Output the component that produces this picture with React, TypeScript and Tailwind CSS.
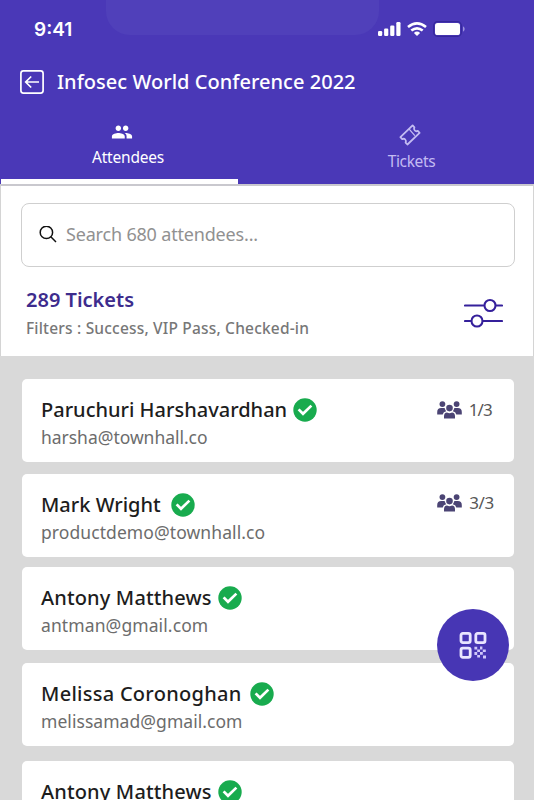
import React from "react";
import { MdPeople } from "react-icons/md";

type Attendee = {
  name: string;
  email: string;
  count?: string;
  card: string;
  row: string;
  nameStyle: string;
  emailStyle: string;
  side?: string;
};

const attendees: Attendee[] = [
  { name: "Paruchuri Harshavardhan", email: "harsha@townhall.co", count: "1/3", card: "", row: "gap-[6px]", nameStyle: "w-[246px]", emailStyle: "tracking-[-0.03px]", side: "pt-[19px] pr-[22px] gap-[7px] tracking-[-0.8px]" },
  { name: "Mark Wright", email: "productdemo@townhall.co", count: "3/3", card: "mt-[12px]", row: "gap-[10px]", nameStyle: "w-[120px]", emailStyle: "tracking-[0.08px]", side: "pt-[17px] pr-[20px] gap-[7px] tracking-[-0.3px]" },
  { name: "Antony Matthews", email: "antman@gmail.com", card: "mt-[10px]", row: "gap-[6px]", nameStyle: "w-[171px] tracking-[0.15px]", emailStyle: "tracking-[0.1px]" },
  { name: "Melissa Coronoghan", email: "melissamad@gmail.com", card: "mt-[13px]", row: "gap-[9px]", nameStyle: "w-[200px] tracking-[0.27px]", emailStyle: "tracking-[0.05px]" },
  { name: "Antony Matthews", email: "antman@gmail.com", card: "mt-[15px]", row: "gap-[6px]", nameStyle: "w-[171px] tracking-[0.15px]", emailStyle: "tracking-[0.1px]" },
];

function Signal() {
  return (
    <svg width="23" height="14" viewBox="0 0 23 14" fill="white">
      <rect x="0" y="9" width="4.2" height="5" rx="1.2" />
      <rect x="6.1" y="6.5" width="4.2" height="7.5" rx="1.2" />
      <rect x="12.2" y="3.5" width="4.2" height="10.5" rx="1.2" />
      <rect x="18.3" y="0" width="4.2" height="14" rx="1.2" />
    </svg>
  );
}

function Wifi() {
  return (
    <svg width="20" height="14" viewBox="0 0 20 14" fill="none" stroke="white" strokeWidth="2.6">
      <path d="M1 5.1Q10-2.2 19 5.1" />
      <path d="M4.3 8.6Q10 4 15.7 8.6" />
      <path d="M6.9 11Q10 8.2 13.1 11L10 14Z" fill="white" stroke="none" />
    </svg>
  );
}

function Battery() {
  return (
    <svg width="32" height="16" viewBox="0 0 32 16">
      <rect x="0.7" y="0.7" width="27.6" height="14.6" rx="3.8" fill="none" stroke="#35279b" strokeWidth="1.2" />
      <rect x="2" y="2" width="25" height="12" rx="2.6" fill="white" />
      <path d="M30 5.3Q31.7 6.3 31.7 8T30 10.7Z" fill="#9d92df" />
    </svg>
  );
}

function BackIcon() {
  return (
    <svg width="24" height="24" viewBox="0 0 24 24" fill="none" stroke="white" strokeWidth="1.7">
      <rect x="0.9" y="0.9" width="22.2" height="22.2" rx="2.5" />
      <path d="M19 12H6M11.2 6.5L5.7 12l5.5 5.5" />
    </svg>
  );
}

function TicketIcon() {
  return (
    <svg className="mr-[4px]" width="22" height="22" viewBox="0 0 22 22" fill="none" stroke="currentColor" strokeWidth="1.8" strokeLinejoin="round" strokeLinecap="round">
      <path d="M13.6 1.4L1.4 13.2L3.2 15.1Q5 14.2 6.2 15.5Q7.6 17 6.6 18.6L8.4 20.5L20.6 8.8L18.8 6.9Q17 7.8 15.8 6.5Q14.4 5 15.4 3.4Z" />
      <path d="M10.4 5.4L15.4 11.2" strokeWidth="1.3" />
    </svg>
  );
}

function CheckBadge() {
  return (
    <svg className="shrink-0" width="24" height="24" viewBox="0 0 24 24">
      <circle cx="12" cy="12" r="11.7" fill="#18ab4e" />
      <path d="M5.6 11.4L10 15.8L18.4 7.6" fill="none" stroke="white" strokeWidth="2.7" strokeLinejoin="miter" strokeLinecap="butt" />
    </svg>
  );
}

function Group() {
  return (
    <svg width="25" height="18" viewBox="0 0 25 18" fill="#4b4474">
      <circle cx="5.4" cy="3.1" r="2.9" />
      <circle cx="19.6" cy="3.1" r="2.9" />
      <path d="M0.2 13.4V11Q0.2 7 4.2 7H7.6Q8.4 9.3 9.2 10.2Q6.3 10.8 5.7 13.4Z" />
      <path d="M24.8 13.4V11Q24.8 7 20.8 7H17.4Q16.6 9.3 15.8 10.2Q18.7 10.8 19.3 13.4Z" />
      <circle cx="12.5" cy="7.1" r="3.3" />
      <path d="M7 17.6V15.3Q7 11.5 10 11.5Q12.5 13 15 11.5Q18 11.5 18 15.3V17.6Z" />
    </svg>
  );
}

function Sliders() {
  return (
    <svg width="39" height="30" viewBox="0 0 39 30" fill="none" stroke="#35209b" strokeWidth="2.1" strokeLinecap="round">
      <path d="M1 7.5H19.5M32 7.5H38M1 23H6.5M19 23H38" />
      <circle cx="26" cy="7.5" r="5.5" />
      <circle cx="13" cy="23" r="5.5" />
    </svg>
  );
}

function QrIcon() {
  return (
    <svg width="28" height="28" viewBox="0 0 28 28" fill="none" stroke="#e9e5ff" strokeWidth="2.8">
      <rect x="2" y="2.4" width="9.2" height="9.2" rx="1.8" />
      <rect x="16.8" y="2.4" width="9.2" height="9.2" rx="1.8" />
      <rect x="2" y="17.2" width="9.2" height="9.2" rx="1.8" />
      <path
        d="M15.4 15.8h2.8v2.6h-2.8zM21 15.6h2.4v2.8H21zM18.2 18.4H21V21h-2.8zM23.8 18.4h3V21h-3zM15.4 21h2.8v3h-2.8zM21 21h2.8v2.8H21zM18.2 24H21v2.6h-2.8zM24 24.4h3v3h-3z"
        fill="#d0c8fa"
        stroke="none"
      />
    </svg>
  );
}

function AttendeeCard({ a }: { a: Attendee }) {
  return (
    <article className={`flex h-[83px] shrink-0 justify-between rounded-[5px] bg-white pl-[19px] ${a.card}`}>
      <div className="flex flex-col pt-[19px]">
        <div className={`flex h-6 items-center ${a.row}`}>
          <h2 className={`text-[20px] leading-6 font-medium whitespace-nowrap text-[#1d1d1d] ${a.nameStyle}`}>{a.name}</h2>
          <CheckBadge />
        </div>
        <p className={`mt-[3px] text-[17.5px] leading-6 whitespace-nowrap text-[#6c6c6c] ${a.emailStyle}`}>{a.email}</p>
      </div>
      {a.count && (
        <div className={`flex h-fit items-center ${a.side}`}>
          <Group />
          <span className="text-[17px] leading-6 text-[#575757]">{a.count}</span>
        </div>
      )}
    </article>
  );
}

export default function App() {
  return (
    <div className="relative flex h-[800px] w-[534px] flex-col overflow-hidden bg-[#d9d9d9] font-['Noto_Sans',sans-serif]">
      <header className="relative flex h-[184px] shrink-0 flex-col bg-[#4a38b7] text-white">
        <div className="absolute top-0 left-[106px] h-[35px] w-[273px] rounded-b-[24px] bg-[#5040ba]" />
        <div className="relative flex h-[58px] items-center justify-between pr-[69px] pl-[34px]">
          <time className="pt-px font-['Inter',sans-serif] text-[19px] leading-6 font-semibold">9:41</time>
          <div className="flex items-center gap-[6px]">
            <Signal />
            <Wifi />
            <Battery />
          </div>
        </div>
        <div className="flex h-[47px] items-center gap-[11px] pl-[20px]">
          <BackIcon />
          <h1 className="pl-[2px] text-[20px] leading-6 font-medium tracking-[0.03px] whitespace-nowrap">Infosec World Conference 2022</h1>
        </div>
        <nav className="flex flex-1 pl-px">
          <button className="flex w-[237px] flex-col items-center border-b-[5px] border-white pt-[16px] pl-[17px]">
            <MdPeople className="mr-[12px] size-[22px]" />
            <span className="mt-[4px] text-[15.5px] leading-5 tracking-[-0.2px]">Attendees</span>
          </button>
          <button className="flex flex-1 flex-col items-center pt-[19px] pl-[51px] text-[#c3bbf2]">
            <TicketIcon />
            <span className="mt-[5px] text-[15.5px] leading-5 tracking-[-0.35px]">Tickets</span>
          </button>
        </nav>
      </header>

      <section className="flex h-[172px] shrink-0 flex-col border-x border-t-2 border-[#d4d4d4] border-t-[#c9c8ce] bg-white pt-[17px]">
        <label className="mr-[18px] ml-[20px] flex h-[64px] items-center rounded-[8px] border border-[#cfcfcf] pl-[17px]">
          <svg width="18" height="18" viewBox="0 0 18 18" fill="none" stroke="#111" strokeWidth="1.5">
            <circle cx="7.4" cy="6.4" r="6.2" />
            <path d="M11.8 10.8L17 16" />
          </svg>
          <span className="ml-[9px] pb-[3px] text-[18px] leading-6 tracking-[-0.18px] text-[#919191]">Search 680 attendees...</span>
        </label>
        <div className="flex justify-between pt-[21px] pr-[30px] pl-[25px]">
          <div className="flex flex-col">
            <strong className="text-[20px] leading-6 font-semibold text-[#3d2c8d]">289 Tickets</strong>
            <span className="mt-[6px] text-[15.5px] leading-5 font-medium tracking-[0.19px] text-[#777]">Filters : Success, VIP Pass, Checked-in</span>
          </div>
          <div className="pt-[10px]">
            <Sliders />
          </div>
        </div>
      </section>

      <main className="flex flex-1 flex-col overflow-hidden pt-[23px] pr-[20px] pl-[22px]">
        {attendees.map((a, i) => (
          <AttendeeCard key={i} a={a} />
        ))}
      </main>

      <button className="absolute top-[609px] left-[437px] flex size-[72px] items-center justify-center rounded-full bg-[#4736b4]">
        <QrIcon />
      </button>
    </div>
  );
}
